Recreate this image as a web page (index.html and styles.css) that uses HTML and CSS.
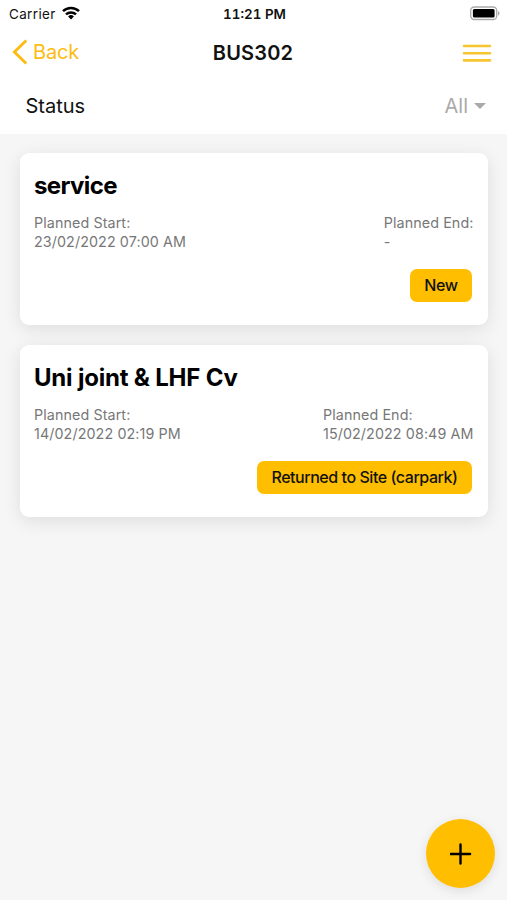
FILE: index.html
```html
<!DOCTYPE html>
<html lang="en">

<head>
    <meta charset="UTF-8">
    <meta name="viewport" content="width=device-width, initial-scale=1.0">
    <title>BUS302</title>
    <link rel="stylesheet" href="styles.css">
</head>

<body>
    <header>
        <div class="status-bar">
            <div class="carrier">
                <span>Carrier</span>
                <svg width="18" height="14" viewBox="0 0 18 14" fill="none" stroke="#000" stroke-width="2.5">
                    <path d="M1 5.2a11.5 11.5 0 0 1 16 0" />
                    <path d="M4 8.4a7.2 7.2 0 0 1 10 0" />
                    <path d="M9 13.4L6.1 10.5a4.2 4.2 0 0 1 5.8 0z" fill="#000" stroke="none" />
                </svg>
            </div>
            <span class="time">11:21 PM</span>
            <svg class="battery" width="31" height="15" viewBox="0 0 31 15">
                <rect x="1.7" y="1" width="26" height="12.5" rx="3.5" fill="#fff" stroke="#aaa" stroke-width="1.3" />
                <rect x="3.9" y="3" width="21.7" height="8.5" rx="1.5" fill="#000" />
                <path d="M29 5.2c2 .6 2 3.6 0 4.2z" fill="#aaa" />
            </svg>
        </div>
        <nav>
            <a class="back">
                <svg width="16" height="26" viewBox="0 0 16 26" fill="none" stroke="#fdbc12" stroke-width="2.9">
                    <path d="M14.2 1.5L2.4 13l11.8 11.5" />
                </svg>
                <span>Back</span>
            </a>
            <h1>BUS302</h1>
            <svg class="menu" width="30" height="20" viewBox="0 0 30 20" stroke="#f7c52e" stroke-width="2.6" stroke-linecap="round">
                <path d="M2 3h26M2 10.2h26M2 17.4h26" />
            </svg>
        </nav>
        <div class="filter">
            <span class="label">Status</span>
            <div class="select">
                <span>All</span>
                <i class="arrow"></i>
            </div>
        </div>
    </header>
    <main>
        <div class="card">
            <h2>service</h2>
            <div class="dates">
                <p>Planned Start:<br>23/02/2022 07:00 AM</p>
                <p>Planned End:<br>-</p>
            </div>
            <span class="tag">New</span>
        </div>
        <div class="card">
            <h2 class="long">Uni joint &amp; LHF Cv</h2>
            <div class="dates">
                <p>Planned Start:<br>14/02/2022 02:19 PM</p>
                <p>Planned End:<br>15/02/2022 08:49 AM</p>
            </div>
            <span class="tag">Returned to Site (carpark)</span>
        </div>
    </main>
    <button class="add-btn">
        <svg width="22" height="22" viewBox="0 0 22 22" stroke="#000" stroke-width="2.4" stroke-linecap="round">
            <path d="M10.5 1.4v19.2M0.9 11h19.2" />
        </svg>
    </button>
</body>

</html>
```
FILE: styles.css
```css
* {
    box-sizing: border-box;
}
body {
    margin: 0;
    height: 900px;
    background: #f6f6f6;
    color: #111;
    font-family: Inter, "Liberation Sans", sans-serif;
    overflow: hidden;
}
svg {
    display: block;
}
header {
    height: 133.5px;
    background: #fff;
}
.status-bar,
nav {
    display: grid;
    grid-template-columns: 1fr auto 1fr;
    align-items: center;
}
.status-bar {
    height: 27px;
    padding: 0 7px 0 9px;
    font-size: 13.4px;
}
.carrier {
    display: flex;
    align-items: center;
    gap: 6px;
    letter-spacing: 0.4px;
}
.carrier svg {
    margin-top: -2px;
}
.time {
    font-weight: 600;
    font-variant-numeric: tabular-nums;
    letter-spacing: 0;
}
.battery {
    justify-self: end;
}
nav {
    height: 50px;
    padding: 0 13px 0 12px;
}
.back {
    display: flex;
    align-items: center;
    gap: 5px;
    color: #fdbc12;
    font-size: 20px;
    letter-spacing: -0.2px;
}
h1 {
    margin: 2px 0 0;
    font-size: 20px;
    font-weight: 600;
    letter-spacing: 0.2px;
}
.menu {
    justify-self: end;
    margin: 2px 2px 0 0;
}
.filter {
    display: flex;
    justify-content: space-between;
    align-items: center;
    height: 57px;
    padding: 0 21px 0 25.5px;
    font-size: 20px;
}
.select {
    display: flex;
    align-items: center;
    gap: 6px;
    color: #aaa;
}
.arrow {
    border: 6px solid transparent;
    border-top-color: #aaa;
    border-bottom: 0;
}
main {
    display: flex;
    flex-direction: column;
    gap: 19.5px;
    padding: 19px 19.5px 0 20.4px;
}
.card {
    display: flex;
    flex-direction: column;
    height: 172.5px;
    padding: 18.5px 14px 0 13.6px;
    border-radius: 9px;
    background: #fff;
    box-shadow: 0 4px 18px rgba(0, 0, 0, 0.1);
}
h2 {
    margin: 0 0 11.5px;
    color: #000;
    font-size: 24px;
    line-height: 30px;
    font-weight: 700;
    letter-spacing: -0.6px;
}
h2.long {
    letter-spacing: -0.2px;
}
.dates {
    display: flex;
    justify-content: space-between;
}
.dates p {
    margin: 0;
    color: #777;
    font-size: 14.3px;
    line-height: 19.5px;
    letter-spacing: 0.1px;
}
.tag {
    align-self: flex-end;
    margin: 17px 2px 0 0;
    padding: 0 14px;
    border-radius: 7px;
    background: #ffbf00;
    font-size: 16px;
    font-weight: 500;
    line-height: 33px;
    letter-spacing: -0.45px;
}
.add-btn {
    position: fixed;
    right: 12px;
    bottom: 12px;
    display: flex;
    justify-content: center;
    align-items: center;
    width: 69px;
    height: 69px;
    padding: 0;
    border: 0;
    border-radius: 50%;
    background: #ffbf00;
    box-shadow: 0 3px 12px rgba(0, 0, 0, 0.1);
}
```
